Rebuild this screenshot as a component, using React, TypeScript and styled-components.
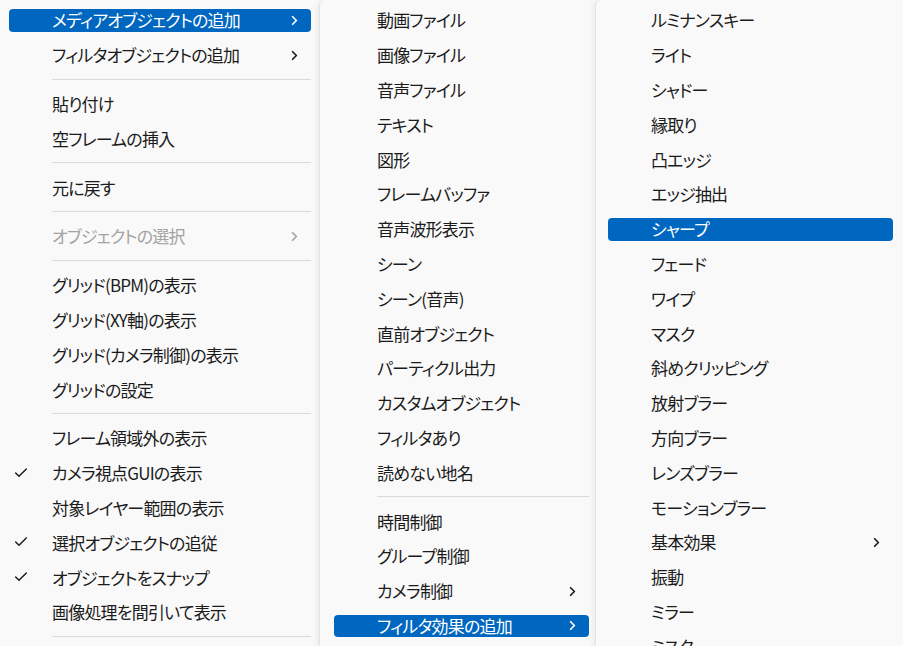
import { FC } from "react";
import styled, { createGlobalStyle } from "styled-components";
import { Check, ChevronRight } from "lucide-react";

type Entry =
  | { kind: "sep" }
  | {
      kind?: "item";
      label: string;
      sub?: boolean;
      active?: boolean;
      disabled?: boolean;
      checked?: boolean;
    };

const mainMenu: Entry[] = [
  { label: "メディアオブジェクトの追加", sub: true, active: true },
  { label: "フィルタオブジェクトの追加", sub: true },
  { kind: "sep" },
  { label: "貼り付け" },
  { label: "空フレームの挿入" },
  { kind: "sep" },
  { label: "元に戻す" },
  { kind: "sep" },
  { label: "オブジェクトの選択", sub: true, disabled: true },
  { kind: "sep" },
  { label: "グリッド(BPM)の表示" },
  { label: "グリッド(XY軸)の表示" },
  { label: "グリッド(カメラ制御)の表示" },
  { label: "グリッドの設定" },
  { kind: "sep" },
  { label: "フレーム領域外の表示" },
  { label: "カメラ視点GUIの表示", checked: true },
  { label: "対象レイヤー範囲の表示" },
  { label: "選択オブジェクトの追従", checked: true },
  { label: "オブジェクトをスナップ", checked: true },
  { label: "画像処理を間引いて表示" },
  { kind: "sep" },
];

const mediaMenu: Entry[] = [
  { label: "動画ファイル" },
  { label: "画像ファイル" },
  { label: "音声ファイル" },
  { label: "テキスト" },
  { label: "図形" },
  { label: "フレームバッファ" },
  { label: "音声波形表示" },
  { label: "シーン" },
  { label: "シーン(音声)" },
  { label: "直前オブジェクト" },
  { label: "パーティクル出力" },
  { label: "カスタムオブジェクト" },
  { label: "フィルタあり" },
  { label: "読めない地名" },
  { kind: "sep" },
  { label: "時間制御" },
  { label: "グループ制御" },
  { label: "カメラ制御", sub: true },
  { label: "フィルタ効果の追加", sub: true, active: true },
];

const filterMenu: Entry[] = [
  { label: "ルミナンスキー" },
  { label: "ライト" },
  { label: "シャドー" },
  { label: "縁取り" },
  { label: "凸エッジ" },
  { label: "エッジ抽出" },
  { label: "シャープ", active: true },
  { label: "フェード" },
  { label: "ワイプ" },
  { label: "マスク" },
  { label: "斜めクリッピング" },
  { label: "放射ブラー" },
  { label: "方向ブラー" },
  { label: "レンズブラー" },
  { label: "モーションブラー" },
  { label: "基本効果", sub: true },
  { label: "振動" },
  { label: "ミラー" },
  { label: "ミスター" },
];

const Menu: FC<{ entries: Entry[]; width: number; left: number; right: number; edge?: boolean }> = ({
  entries,
  width,
  left,
  right,
  edge,
}) => (
  <Panel $width={width} $left={left} $right={right} $edge={edge}>
    {entries.map((e, i) =>
      e.kind === "sep" ? (
        <Separator key={i} />
      ) : (
        <Item key={i} $active={e.active} $disabled={e.disabled}>
          {e.checked && (
            <CheckMark>
              <Check size={16} strokeWidth={2.2} />
            </CheckMark>
          )}
          <Label>{e.label}</Label>
          {e.sub && (
            <Arrow>
              <ChevronRight size={15} strokeWidth={2.8} />
            </Arrow>
          )}
        </Item>
      )
    )}
  </Panel>
);

const App: FC = () => {
  return (
    <>
      <GlobalStyle />
      <Screen>
        <Menu entries={mainMenu} width={319} left={9} right={8} />
        <Menu entries={mediaMenu} width={276} left={14} right={6} edge />
        <Menu entries={filterMenu} width={308} left={12} right={10} edge />
      </Screen>
    </>
  );
};

const GlobalStyle = createGlobalStyle`
  html, body {
    margin: 0;
    background: #f9f9f9;
    overflow: hidden;
  }
`;

const Screen = styled.div`
  display: flex;
  align-items: flex-start;
  width: 903px;
  height: 646px;
  overflow: hidden;
  font-family: "Noto Sans CJK JP", "Noto Sans", sans-serif;
  font-feature-settings: "palt";
  font-size: 17px;
  color: #1b1b1b;
`;

const Panel = styled.div<{ $width: number; $left: number; $right: number; $edge?: boolean }>`
  flex: none;
  display: flex;
  flex-direction: column;
  box-sizing: border-box;
  width: ${(p) => p.$width}px;
  height: 700px;
  padding: 3px ${(p) => p.$right}px 0 ${(p) => p.$left}px;
  background: #f9f9f9;
  border-left: ${(p) => (p.$edge ? "1px solid #e3e3e3" : "none")};
  box-shadow: ${(p) => (p.$edge ? "-2px 0 5px rgba(0, 0, 0, 0.06)" : "none")};
  border-top-left-radius: ${(p) => (p.$edge ? "6px" : "0")};
`;

const Item = styled.div<{ $active?: boolean; $disabled?: boolean }>`
  position: relative;
  flex: none;
  display: flex;
  align-items: center;
  height: 22.8px;
  margin: 6px 0;
  padding: 0 9px 0 43px;
  border-radius: 4px;
  background: ${(p) => (p.$active ? "#0067c0" : "transparent")};
  color: ${(p) => (p.$active ? "#ffffff" : p.$disabled ? "#a3a3a3" : "#1b1b1b")};
  white-space: nowrap;
`;

const Label = styled.span`
  flex: 1;
  line-height: 22px;
  letter-spacing: -0.8px;
`;

const Arrow = styled.span`
  display: flex;
  align-items: center;
`;

const CheckMark = styled.span`
  position: absolute;
  left: 4px;
  top: 3px;
  display: flex;
  color: #1b1b1b;
`;

const Separator = styled.div`
  flex: none;
  height: 1px;
  margin: 6px 0 7px 43px;
  background: #d9d9d9;
`;

export default App;
